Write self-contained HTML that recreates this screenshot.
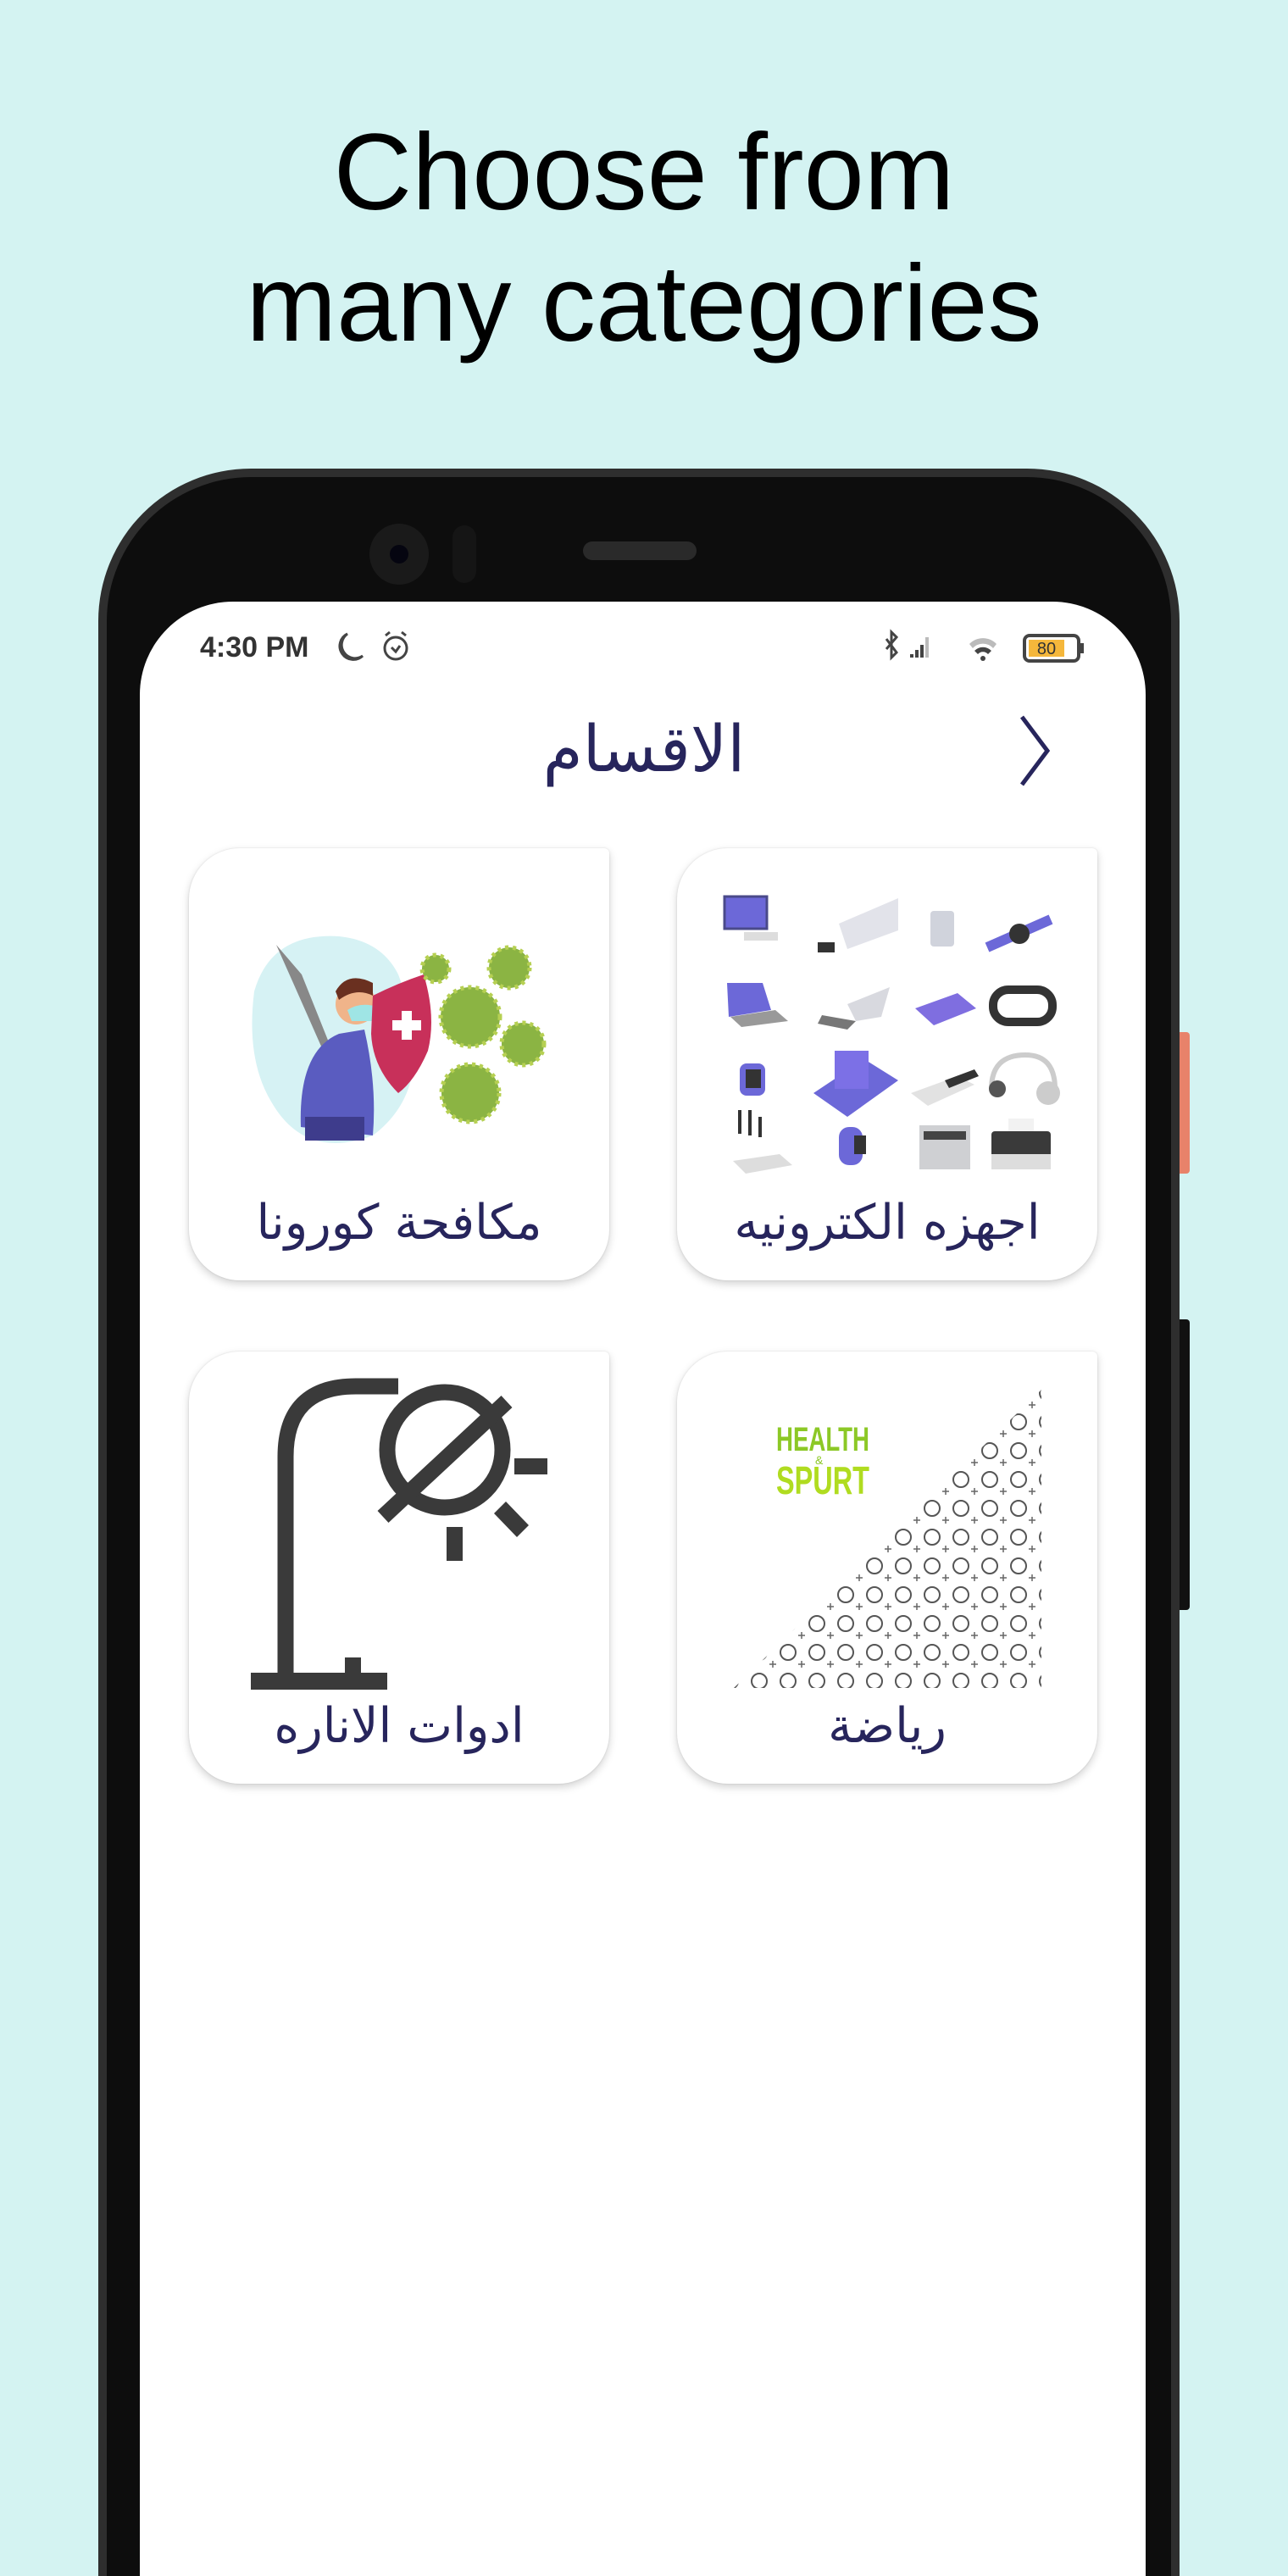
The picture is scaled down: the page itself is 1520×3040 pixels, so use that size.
<!DOCTYPE html>
<html><head><meta charset="utf-8">
<style>
html,body{margin:0;padding:0;width:1520px;height:3040px;overflow:hidden}
body{background:#d4f3f2;font-family:"Liberation Sans","Noto Sans CJK SC",sans-serif}
#w{position:relative;width:1520px;height:3040px;overflow:hidden}
.h{position:absolute;left:0;width:1520px;text-align:center;font-size:128px;color:#000;line-height:1}
.phone{position:absolute;left:116px;top:553px;width:1256px;height:2477px;background:#0d0d0d;border-radius:180px 180px 0 0;border:10px solid #2e2e2e;border-bottom:none}
.screen{position:absolute;left:165px;top:710px;width:1187px;height:2330px;background:#fff;border-radius:110px 110px 0 0}
.card{position:absolute;width:496px;height:510px;background:#fff;border-radius:60px 6px 60px 60px;box-shadow:0 4px 10px rgba(0,0,0,.18),0 0 2px rgba(0,0,0,.12)}
.lbl{position:absolute;left:0;right:0;bottom:34px;text-align:center;font-family:"DejaVu Sans",sans-serif;font-size:57px;color:#27255c;direction:rtl;line-height:1.2}
.st{position:absolute;top:745px;font-size:34px;font-weight:bold;color:#333}
</style></head><body><div id="w">
<div class="h" style="top:140px">Choose from</div>
<div class="h" style="top:295px">many categories</div>

<div class="phone"></div>
<div style="position:absolute;left:1392px;top:1218px;width:12px;height:167px;background:#e8826a;border-radius:0 4px 4px 0"></div>
<div style="position:absolute;left:1392px;top:1557px;width:12px;height:343px;background:#111;border-radius:0 4px 4px 0"></div>
<div style="position:absolute;left:436px;top:618px;width:70px;height:72px;border-radius:50%;background:#1a1a1a"></div>
<div style="position:absolute;left:460px;top:643px;width:22px;height:22px;border-radius:50%;background:#050510"></div>
<div style="position:absolute;left:534px;top:620px;width:28px;height:68px;border-radius:14px;background:#151515"></div>
<div style="position:absolute;left:688px;top:639px;width:134px;height:22px;border-radius:11px;background:#2a2a2a"></div>

<div class="screen"></div>
<div class="st" style="left:236px">4:30 PM</div>
<svg style="position:absolute;left:392px;top:740px" width="100" height="50" viewBox="0 0 100 50">
<path d="M18 8 A16 16 0 1 0 36 34 A14 14 0 0 1 18 8Z" fill="none" stroke="#444" stroke-width="3"/>
<circle cx="75" cy="25" r="13" fill="none" stroke="#444" stroke-width="3"/>
<path d="M70 24 L75 29 L80 22 M63 10 L68 6 M87 10 L82 6" fill="none" stroke="#444" stroke-width="3"/>
</svg>
<svg style="position:absolute;left:1040px;top:740px" width="250" height="50" viewBox="0 0 250 50">
<path d="M6 14 L18 30 L12 36 V6 L18 12 L6 26" fill="none" stroke="#444" stroke-width="3"/>
<path d="M34 36 h4 v-4 h-4z M40 36 h4 v-9 h-4z M46 36 h4 v-15 h-4z" fill="#444"/><path d="M52 36 h4 v-24 h-4z" fill="#bbb"/>
<path d="M104 20 A22 22 0 0 1 136 20 L132 25 A16 16 0 0 0 108 25Z" fill="#bbb"/>
<path d="M110 28 A14 14 0 0 1 130 28 L126 32 A8 8 0 0 0 114 32Z" fill="#444"/><circle cx="120" cy="37" r="3" fill="#444"/>
<rect x="169" y="10" width="64" height="30" rx="6" fill="none" stroke="#444" stroke-width="4"/>
<rect x="174" y="15" width="42" height="20" fill="#f5b73b"/>
<text x="195" y="32" text-anchor="middle" font-family="Liberation Sans" font-size="20" fill="#333">80</text>
<rect x="235" y="19" width="4" height="12" fill="#444"/>
</svg>

<div style="position:absolute;left:520px;top:838px;width:480px;text-align:center;font-family:'DejaVu Sans',sans-serif;font-size:76px;color:#27255c;direction:rtl;line-height:1.2">الاقسام</div>
<svg style="position:absolute;left:1196px;top:842px" width="50" height="90" viewBox="0 0 50 90"><path d="M10 4 L40 44 L10 84" fill="none" stroke="#27255c" stroke-width="5"/></svg>

<div class="card" style="left:223px;top:1001px"><div class="lbl">مكافحة كورونا</div></div>
<div class="card" style="left:799px;top:1001px"><div class="lbl">اجهزه الكترونيه</div></div>
<div class="card" style="left:223px;top:1595px"><div class="lbl">ادوات الاناره</div></div>
<div class="card" style="left:799px;top:1595px"><div class="lbl">رياضة</div></div>

<svg style="position:absolute;left:0;top:0" width="1520" height="3040" viewBox="0 0 1520 3040">
<defs>
<pattern id="dp" width="34" height="34" patternUnits="userSpaceOnUse">
<circle cx="12" cy="12" r="9" fill="none" stroke="#555" stroke-width="2"/><path d="M24 26 h8 M28 22 v8" stroke="#666" stroke-width="1.5"/>
</pattern>
</defs>
<g transform="translate(0,-16)">
<g fill="none" stroke="#3a3a3a" stroke-width="19">
<path d="M337 1994 V1735 Q337 1652 420 1652 H470"/>
<circle cx="525" cy="1727" r="68"/>
<path d="M598 1670 L452 1806"/>
</g>
<g fill="#3a3a3a">
<rect x="296" y="1990" width="161" height="20"/>
<rect x="407" y="1972" width="19" height="20"/>
<rect x="607" y="1737" width="39" height="19"/>
<rect x="527" y="1818" width="19" height="40"/>
<path d="M583 1802 L597 1788 L624 1816 L610 1830Z"/>
</g>
</g>
<path d="M300 1170 Q320 1100 400 1105 Q450 1110 470 1150 Q520 1280 440 1340 Q360 1370 320 1300 Q290 1250 300 1170Z" fill="#d6f2f4"/>
<path d="M326 1115 L356 1150 L392 1240 L384 1246 L346 1160Z" fill="#888"/>
<rect x="380" y="1238" width="16" height="32" fill="#bbb"/>
<path d="M355 1330 Q352 1240 400 1220 L430 1215 Q445 1280 440 1340Z" fill="#5a5cc0"/>
<rect x="360" y="1318" width="70" height="28" fill="#3e3c8c"/>
<circle cx="420" cy="1185" r="24" fill="#f0b48a"/>
<path d="M396 1170 Q410 1145 440 1160 L440 1175 Q420 1165 400 1180Z" fill="#6a3020"/>
<path d="M410 1192 Q425 1182 445 1188 L440 1205 L415 1205Z" fill="#9fe5e5"/>
<path d="M440 1175 Q470 1160 500 1150 Q515 1200 505 1240 Q490 1275 470 1290 Q440 1260 438 1220Z" fill="#c8305a"/>
<path d="M463 1210 h34 M480 1193 v34" stroke="#fff" stroke-width="12"/>
<g fill="#8bb443" stroke="#b6d052" stroke-width="5" stroke-dasharray="4 5">
<circle cx="601" cy="1142" r="24"/><circle cx="514" cy="1143" r="16"/>
<circle cx="555" cy="1200" r="35"/><circle cx="617" cy="1232" r="25"/><circle cx="555" cy="1290" r="34"/>
</g>
<g>
<rect x="855" y="1058" width="50" height="38" fill="#6c68d8" stroke="#4a4a8a" stroke-width="3"/><rect x="878" y="1100" width="40" height="10" fill="#ddd"/>
<path d="M990 1090 L1060 1060 L1060 1098 L1000 1120Z" fill="#e2e3ea"/><rect x="965" y="1112" width="20" height="12" fill="#333"/>
<rect x="1098" y="1075" width="28" height="42" rx="4" fill="#d0d3dc"/>
<path d="M1165 1118 L1240 1085" stroke="#6c68d8" stroke-width="12"/><circle cx="1203" cy="1102" r="12" fill="#333"/>
<path d="M858 1160 L900 1160 L910 1192 L860 1200Z" fill="#6c68d8"/><path d="M862 1200 L915 1192 L930 1205 L875 1212Z" fill="#999"/>
<path d="M1000 1185 L1050 1165 L1040 1200 L1010 1205Z" fill="#d8d9df"/><path d="M970 1198 L1010 1205 L1000 1215 L965 1208Z" fill="#777"/>
<path d="M1080 1190 L1130 1172 L1152 1190 L1102 1210Z" fill="#7f6ee0"/>
<rect x="1172" y="1168" width="70" height="38" rx="18" fill="#fff" stroke="#333" stroke-width="10"/>
<rect x="873" y="1255" width="30" height="38" rx="8" fill="#6c68d8"/><rect x="880" y="1262" width="18" height="22" fill="#333"/>
<path d="M960 1290 L1020 1250 L1060 1275 L1000 1318Z" fill="#6c68d8"/><rect x="985" y="1240" width="40" height="45" fill="#7c70e6"/>
<path d="M1075 1290 L1130 1270 L1150 1280 L1095 1305Z" fill="#e2e2e2"/><path d="M1115 1275 L1150 1262 L1155 1270 L1120 1284Z" fill="#333"/>
<path d="M1170 1285 Q1170 1245 1210 1245 Q1245 1245 1245 1285" fill="none" stroke="#ccc" stroke-width="6"/><circle cx="1177" cy="1285" r="10" fill="#555"/><circle cx="1237" cy="1290" r="14" fill="#ccc"/>
<path d="M873 1338 V1310 M885 1340 V1310 M897 1342 V1318" stroke="#333" stroke-width="4"/><path d="M865 1370 L920 1362 L935 1375 L880 1385Z" fill="#ddd"/>
<rect x="990" y="1330" width="28" height="45" rx="12" fill="#6c68d8"/><rect x="1008" y="1340" width="14" height="22" fill="#333"/>
<rect x="1085" y="1328" width="60" height="52" fill="#cfd0d3"/><rect x="1090" y="1335" width="50" height="10" fill="#444"/>
<rect x="1170" y="1335" width="70" height="38" rx="4" fill="#3a3a3a"/><rect x="1170" y="1362" width="70" height="18" fill="#ddd"/><rect x="1190" y="1320" width="30" height="15" fill="#f2f2f2"/>
</g>
<text x="916" y="1712" font-family="Liberation Sans" font-weight="bold" font-size="40" fill="#8cc826" textLength="110" lengthAdjust="spacingAndGlyphs">HEALTH</text>
<text x="962" y="1728" font-family="Liberation Sans" font-size="14" fill="#8cc826">&amp;</text>
<text x="916" y="1763" font-family="Liberation Sans" font-weight="bold" font-size="46" fill="#b0dc20" textLength="110" lengthAdjust="spacingAndGlyphs">SPURT</text>
<path d="M1229 1640 L1229 1992 L866 1992Z" fill="url(#dp)"/>
</svg>
</div></body></html>
